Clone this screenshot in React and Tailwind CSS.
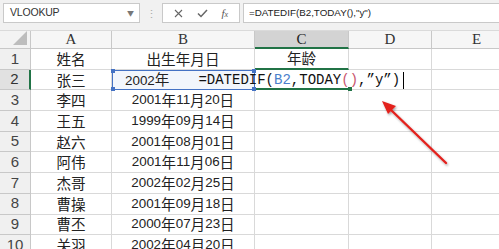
import React from 'react'

const cols = [31, 81, 143, 94, 83, 90]

const rows = [
  ['姓名', '出生年月日', '年龄'],
  ['张三', null, ''],
  ['李四', '2001年11月20日', ''],
  ['王五', '1999年09月14日', ''],
  ['赵六', '2001年08月01日', ''],
  ['阿伟', '2001年11月06日', ''],
  ['杰哥', '2002年02月25日', ''],
  ['曹操', '2001年09月18日', ''],
  ['曹丕', '2000年07月23日', ''],
  ['关羽', '2002年04月20日', ''],
]

// digits in a half-width latin face, CJK in the wider one
function Mix({ s }) {
  return s.split(/(\d+)/).map((part, i) =>
    /^\d+$/.test(part) ? (
      <span key={i} className="font-['Liberation_Sans'] text-[13.4px]">{part}</span>
    ) : (
      <span key={i}>{part}</span>
    )
  )
}

function Toolbar() {
  return (
    <div className="flex h-[30px] items-start bg-[#f1f1f1] pt-[3px] pl-[3px]">
      <div className="flex h-[20px] w-[137px] shrink-0 items-center justify-between border border-[#c9c9c9] bg-white pl-[6px] pr-[5px]">
        <span className="font-['Liberation_Sans'] text-[10.5px] tracking-[-0.2px] text-[#333]">VLOOKUP</span>
        <span className="text-[7px] text-[#777]">▼</span>
      </div>
      <div className="flex h-[20px] w-[22px] shrink-0 items-center justify-center text-[11px] leading-none text-[#aaa]">⋮</div>
      <div className="flex h-[20px] w-[78px] shrink-0 items-center justify-around border border-[#c9c9c9] bg-white px-[4px] text-[#555]">
        <svg width="9" height="9" viewBox="0 0 9 9">
          <path d="M1 1 L8 8 M8 1 L1 8" stroke="#666" strokeWidth="1.1" />
        </svg>
        <svg width="11" height="9" viewBox="0 0 11 9">
          <path d="M1 4.5 L4 7.5 L10 1" stroke="#666" strokeWidth="1.5" fill="none" />
        </svg>
        <span className="font-['Liberation_Serif'] text-[11px] italic text-[#555]">f<span className="text-[8px]">x</span></span>
      </div>
      <div className="ml-[3px] flex h-[20px] flex-1 items-center border border-r-0 border-[#c9c9c9] bg-white pl-[5px]">
        <span className="font-['Liberation_Sans'] text-[9.8px] text-[#222]">=DATEDIF(B2,TODAY(),"y")</span>
      </div>
    </div>
  )
}

function HeaderRow() {
  const letters = ['A', 'B', 'C', 'D', 'E']
  return (
    <div className="flex h-[19px] border-t border-[#dadada]">
      <div className="relative h-full shrink-0 border-r border-b border-[#c8c8c8] bg-[#f3f3f3]" style={{ width: cols[0] }}>
        <div className="absolute right-[3px] bottom-[3px] h-0 w-0 border-b-[14px] border-l-[14px] border-b-[#bdbdbd] border-l-transparent" />
      </div>
      {letters.map((l, i) => (
        <div
          key={l}
          className={
            l === 'C'
              ? "flex h-full shrink-0 items-center justify-center border-r border-b-2 border-r-[#c8c8c8] border-b-[#217346] bg-[#d3d3d3] font-['Liberation_Serif'] text-[15px] text-[#222]"
              : "flex h-full shrink-0 items-center justify-center border-r border-b border-[#c8c8c8] bg-[#f6f6f6] font-['Liberation_Serif'] text-[15px] text-[#333]"
          }
          style={{ width: cols[i + 1] }}
        >
          {l}
        </div>
      ))}
    </div>
  )
}

function Formula() {
  return (
    <span className="shrink-0 font-['Liberation_Mono'] text-[14px] text-[#111]">
      =DATEDIF(<span className="text-[#4a7fcc]">B2</span>,TODAY<span className="text-[#c9566e]">()</span>,”y”)
    </span>
  )
}

function Row({ n, cells }) {
  const active = n === 2
  return (
    <div className="flex h-[20.7px]">
      <div
        className={
          active
            ? "flex h-full shrink-0 items-center justify-center border-r-2 border-b border-r-[#217346] border-b-[#c8c8c8] bg-[#e1e1e1] font-['Liberation_Sans'] text-[15px] text-[#333]"
            : "flex h-full shrink-0 items-center justify-center border-r border-b border-[#c8c8c8] bg-[#f0f0f0] font-['Liberation_Sans'] text-[15px] text-[#444]"
        }
        style={{ width: cols[0] }}
      >
        {n}
      </div>
      <div className="flex h-full shrink-0 items-center justify-center border-r border-b border-[#d9d9d9] text-[14.6px] text-[#222]" style={{ width: cols[1] }}>
        {cells[0]}
      </div>
      {active ? (
        <div className="relative z-10 flex h-full shrink-0 items-center overflow-visible border border-[#4472c4] bg-[#f2f6fc] pl-[12px] text-[14.6px] whitespace-nowrap text-[#222]" style={{ width: cols[2] }}>
          <span className="shrink-0">
            <Mix s="2002年" />
          </span>
          <span className="w-[29px] shrink-0" />
          <Formula />
          <span className="ml-[3px] h-[17px] w-px shrink-0 bg-black" />
          <span className="absolute -top-[2px] -left-[2px] h-[4px] w-[4px] bg-[#4472c4]" />
          <span className="absolute -top-[2px] -right-[2px] h-[4px] w-[4px] bg-[#4472c4]" />
          <span className="absolute -bottom-[2px] -left-[2px] h-[4px] w-[4px] bg-[#4472c4]" />
          <span className="absolute -right-[2px] -bottom-[2px] h-[4px] w-[4px] bg-[#4472c4]" />
        </div>
      ) : (
        <div className="flex h-full shrink-0 items-center justify-center border-r border-b border-[#d9d9d9] text-[14.6px] whitespace-nowrap text-[#222]" style={{ width: cols[2] }}>
          <Mix s={cells[1]} />
        </div>
      )}
      <div
        className={
          n === 1
            ? 'flex h-full shrink-0 items-center justify-center border-r border-b-2 border-r-[#d9d9d9] border-b-[#217346] text-[14.6px] text-[#222]'
            : active
              ? 'relative h-full shrink-0 border-b-2 border-[#217346]'
              : 'flex h-full shrink-0 items-center justify-center border-r border-b border-[#d9d9d9] text-[14.6px] text-[#222]'
        }
        style={{ width: cols[3] }}
      >
        {n === 1 ? cells[2] : null}
        {active && <span className="absolute -right-[3px] -bottom-[3px] h-[4px] w-[4px] bg-[#217346]" />}
      </div>
      <div className="h-full shrink-0 border-r border-b border-[#d9d9d9]" style={{ width: cols[4] }} />
      <div className="h-full shrink-0 border-b border-[#d9d9d9]" style={{ width: cols[5] }} />
    </div>
  )
}

export default function App() {
  return (
    <div className="relative h-[249px] w-[499px] overflow-hidden bg-white font-['Noto_Sans_CJK_SC',sans-serif]">
      <Toolbar />
      <HeaderRow />
      {rows.map((r, i) => (
        <Row key={i} n={i + 1} cells={r} />
      ))}
      {/* red arrow pointing at the formula */}
      <svg className="pointer-events-none absolute top-0 left-0" width="499" height="249">
        <defs>
          <filter id="sh" x="-20%" y="-20%" width="140%" height="140%">
            <feDropShadow dx="1" dy="1.5" stdDeviation="1" floodColor="#000" floodOpacity="0.35" />
          </filter>
        </defs>
        <g filter="url(#sh)">
          <line x1="446" y1="163" x2="390" y2="109" stroke="#e3211f" strokeWidth="2.4" strokeLinecap="round" />
          <path d="M382 101 L396 106 L388 114 Z" fill="#e3211f" />
        </g>
      </svg>
    </div>
  )
}
